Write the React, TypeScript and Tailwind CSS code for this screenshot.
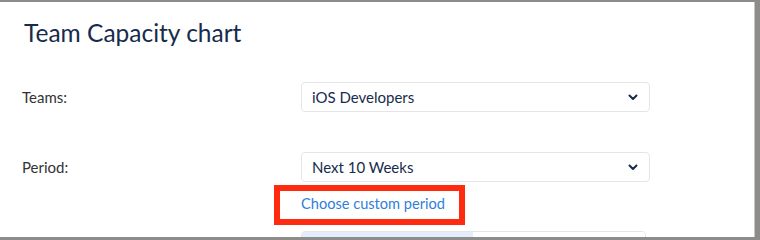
import React from "react";

function Chevron() {
  return (
    <svg width="10" height="7" viewBox="0 0 10 7" className="shrink-0">
      <path d="M1.5 1.5 L5 5 L8.5 1.5" fill="none" stroke="#172b4d" strokeWidth="2" strokeLinecap="round" strokeLinejoin="round" />
    </svg>
  );
}

function Select({ value }: { value: string }) {
  return (
    <div className="w-[349px] h-[30px] rounded-[4px] border border-[#e3e5e8] bg-white flex items-center justify-between pl-[10px] pr-[11px]">
      <span className="text-[15px] leading-[20px] text-[#172b4d]">{value}</span>
      <Chevron />
    </div>
  );
}

export default function App() {
  return (
    <div
      className="w-[760px] h-[240px] bg-[#8e8c8a] pt-[2px] pr-[5px] pb-[3px] overflow-hidden"
      style={{ fontFamily: "Lato, 'Open Sans', sans-serif" }}
    >
      <div className="w-full h-full bg-white border-r border-[#c9c7c5] overflow-hidden flex flex-col">
        <h1 className="ml-[24px] mt-[15px] text-[24.5px] leading-[32px] text-[#172b4d] font-normal">
          Team Capacity chart
        </h1>

        <div className="mt-[33px] flex items-start">
          <div className="w-[301px] pl-[22px] h-[30px] flex items-center text-[15px] text-[#333333]">Teams:</div>
          <Select value="iOS Developers" />
        </div>

        <div className="mt-[40px] flex items-start">
          <div className="w-[301px] pl-[22px] h-[30px] flex items-center text-[15px] text-[#333333]">Period:</div>
          <div className="flex flex-col">
            <Select value="Next 10 Weeks" />
            <div className="relative mt-[12px] h-[20px] flex items-center">
              <span className="text-[14.6px] leading-[20px] text-[#2f80d9]">Choose custom period</span>
              <div className="absolute left-[-27px] top-[-9px] w-[191px] h-[40px] border-[6px] border-[#fe2b10]" />
            </div>
            <div className="mt-[17px] w-[345px] h-[20px] flex rounded-t-[4px] border border-[#e3e5e8] overflow-hidden">
              <div className="w-[171px] bg-[#e4edfb]" />
              <div className="flex-1 bg-white" />
            </div>
          </div>
        </div>
      </div>
    </div>
  );
}
